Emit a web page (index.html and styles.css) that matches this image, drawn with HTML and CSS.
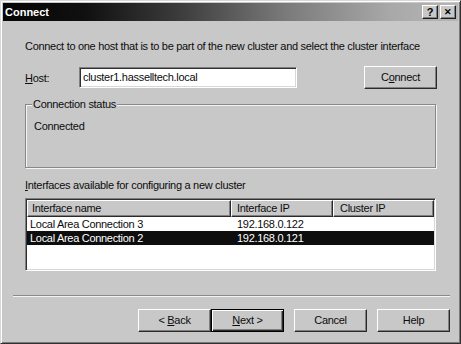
FILE: index.html
```html
<!DOCTYPE html>
<html>
<head>
<meta charset="utf-8">
<link rel="stylesheet" href="styles.css">
</head>
<body>
<div class="window">
  <div class="titlebar">
    <span class="title">Connect</span>
    <div class="tbtns">
      <span class="tbtn">?</span>
      <span class="tbtn close">✕</span>
    </div>
  </div>
  <div class="main">
    <p class="intro">Connect to one host that is to be part of the new cluster and select the cluster interface</p>
    <div class="hostrow">
      <span class="hostlabel"><u>H</u>ost:</span>
      <div class="input">cluster1.hasselltech.local</div>
      <div class="btn connect">C<u>o</u>nnect</div>
    </div>
    <fieldset class="group">
      <legend>Connection status</legend>
      <div class="status">Connected</div>
    </fieldset>
    <div class="listlabel"><u>I</u>nterfaces available for configuring a new cluster</div>
    <div class="list">
      <div class="header">
        <div class="hcell h1">Interface name</div>
        <div class="hcell h2">Interface IP</div>
        <div class="hcell h3">Cluster IP</div>
      </div>
      <div class="row">
        <div class="cell c1">Local Area Connection 3</div>
        <div class="cell c2">192.168.0.122</div>
        <div class="cell c3"></div>
      </div>
      <div class="row sel">
        <div class="cell c1">Local Area Connection 2</div>
        <div class="cell c2">192.168.0.121</div>
        <div class="cell c3"></div>
      </div>
    </div>
  </div>
  <div class="sep"></div>
  <div class="buttons">
    <div class="btn">&lt; <u>B</u>ack</div>
    <div class="btn default"><u>N</u>ext &gt;</div>
    <div class="btn gap">Cancel</div>
    <div class="btn gap">Help</div>
  </div>
</div>
</body>
</html>
```

FILE: styles.css
```css
* { box-sizing: border-box; }
html, body { margin: 0; padding: 0; background: #c8c8c8; }
body { font-family: "Liberation Sans", Arial, sans-serif; font-size: 11px; letter-spacing: -0.3px; color: #0c0c0c; }

.window {
  width: 461px;
  height: 344px;
  background: #c8c8c8;
  border: 1px solid;
  border-color: #d8d8d8 #303030 #303030 #d8d8d8;
  box-shadow: inset 1px 1px #ffffff, inset -1px -1px #7a7a7a;
  padding: 2px;
  display: flex;
  flex-direction: column;
}

.titlebar {
  height: 18px;
  flex: none;
  display: flex;
  align-items: center;
  background: linear-gradient(to right, #060606 0%, #101010 18%, #3a3a3a 38%, #7a7a7a 62%, #a8a8a8 85%, #b6b6b6 100%);
  padding: 0 2px 0 2px;
}
.title {
  color: #fff;
  font-weight: bold;
  font-size: 11px;
  letter-spacing: 0;
  flex: 1;
  line-height: 14px;
}
.tbtns { display: flex; gap: 2px; }
.tbtn {
  width: 16px;
  height: 14px;
  background: #c8c8c8;
  border: 1px solid;
  border-color: #ffffff #1c1c1c #1c1c1c #ffffff;
  box-shadow: inset -1px -1px #808080;
  font-weight: bold;
  font-size: 11px;
  letter-spacing: 0;
  line-height: 12px;
  text-align: center;
  color: #000;
}
.tbtn.close { font-size: 9px; }

.main {
  padding: 0 22px;
  flex: none;
}
.intro {
  margin: 19px 0 0 0;
  line-height: 13px;
  white-space: nowrap;
}
.hostrow {
  margin-top: 13px;
  display: flex;
  align-items: center;
  height: 23px;
}
.hostlabel { width: 54px; }
.input {
  width: 218px;
  height: 21px;
  background: #fff;
  border: 1px solid;
  border-color: #808080 #ffffff #ffffff #808080;
  box-shadow: inset 1px 1px #303030, inset -1px -1px #d8d8d8;
  padding: 3px 3px;
  line-height: 13px;
}
.btn {
  width: 73px;
  height: 23px;
  border: 1px solid;
  border-color: #ffffff #2a2a2a #2a2a2a #ffffff;
  box-shadow: inset -1px -1px #808080;
  background: #c8c8c8;
  text-align: center;
  line-height: 20px;
  color: #0c0c0c;
}
.connect { margin-left: auto; margin-right: -1px; }

.group {
  margin: 9px 0 0 0;
  padding: 9px 8px 0 8px;
  height: 70px;
  border: 1px solid #888;
  box-shadow: 1px 1px #f4f4f4, inset 1px 1px #f4f4f4;
}
.group legend {
  padding: 0 1px;
  margin-left: -2px;
  line-height: 13px;
  background: #c8c8c8;
}
.status { line-height: 13px; }

.listlabel {
  margin-top: 11px;
  line-height: 13px;
}
.list {
  margin-top: 6px;
  height: 73px;
  background: #fff;
  border: 1px solid;
  border-color: #808080 #ffffff #ffffff #808080;
  box-shadow: inset 1px 1px #303030, inset -1px -1px #d8d8d8;
  padding: 1px;
}
.header, .row {
  display: grid;
  grid-template-columns: 204px 102px 1fr;
}
.hcell {
  height: 17px;
  background: #c8c8c8;
  border: 1px solid;
  border-color: #ffffff #2a2a2a #2a2a2a #ffffff;
  box-shadow: inset -1px -1px #808080;
  line-height: 14px;
  white-space: nowrap;
}
.h1 { padding-left: 4px; }
.h2 { padding-left: 5px; }
.h3 { padding-left: 6px; }
.row { height: 14px; line-height: 14px; }
.cell { white-space: nowrap; }
.c1 { padding-left: 3px; }
.c2 { padding-left: 6px; }
.row.sel { background: #0e0e0e; color: #fff; }

.sep {
  margin: 24px 8px 0 10px;
  height: 2px;
  border-top: 1px solid #8a8a8a;
  border-bottom: 1px solid #f4f4f4;
  flex: none;
}
.buttons {
  margin-top: 12px;
  display: flex;
  justify-content: flex-end;
  padding-right: 8px;
}
.btn.default {
  border: 1px solid #000;
  box-shadow: inset 1px 1px #ffffff, inset -1px -1px #2a2a2a, inset -2px -2px #808080;
}
.btn.gap { margin-left: 10px; }
u { text-decoration: underline; text-underline-offset: 1px; }
```
